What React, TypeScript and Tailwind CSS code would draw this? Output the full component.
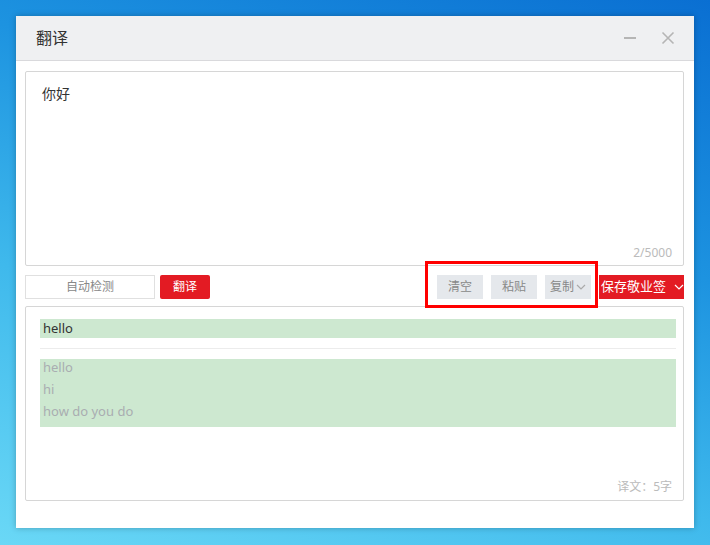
import { useState } from 'react';

const font = "font-['Noto_Sans','Noto_Sans_CJK_SC',sans-serif]";

function Chevron({ className }: { className?: string }) {
  return (
    <svg width="10" height="6" viewBox="0 0 10 6" className={className}>
      <polyline points="1,1 5,5 9,1" fill="none" stroke="currentColor" strokeWidth="1.2" />
    </svg>
  );
}

function TitleBar() {
  return (
    <div className="flex h-[45px] items-center justify-between border-b border-[#d9d9dc] bg-[#eff0f2] pl-[20px] pr-[19px]">
      <span className="text-[16px] text-[#333]">翻译</span>
      <div className="flex items-center gap-[24px]">
        <svg width="14" height="14" viewBox="0 0 14 14">
          <line x1="1" y1="7" x2="13" y2="7" stroke="#b5b5b5" strokeWidth="2" />
        </svg>
        <svg width="14" height="14" viewBox="0 0 14 14">
          <path d="M1.5 1.5 L12.5 12.5 M12.5 1.5 L1.5 12.5" stroke="#b5b5b5" strokeWidth="1.6" />
        </svg>
      </div>
    </div>
  );
}

export default function App() {
  const [text] = useState('你好');
  const results = ['hello', 'hi', 'how do you do'];

  return (
    <div
      className={`${font} h-[545px] w-[710px] overflow-hidden bg-[linear-gradient(200deg,#0a6fd2_0%,#1d93e0_35%,#3fb9ec_65%,#6ad8f6_100%)] pl-4 pt-4`}
    >
      <div className="flex h-[512px] w-[678px] flex-col bg-white shadow-[0_0_6px_rgba(0,0,0,0.25)]">
        <TitleBar />
        <div className="flex flex-col pl-[9px] pr-[10px] pt-[10px]">
          <div className="flex h-[195px] flex-col justify-between rounded-[2px] border border-[#d6d6d6] pb-[3px] pl-[16px] pr-[11px] pt-[12px]">
            <div className="text-[14px] leading-[20px] text-[#333]">{text}</div>
            <div className="self-end text-[12px] leading-[18px] text-[#bbb]">
              {text.length}/5000
            </div>
          </div>

          <div className="relative mt-[9px] flex h-[24px] items-center justify-between">
            <div className="flex items-center gap-[5px]">
              <div className="flex h-[24px] w-[130px] items-center justify-center border border-[#e0e0e0] text-[12px] text-[#888]">
                自动检测
              </div>
              <button className="flex h-[24px] w-[50px] items-center justify-center rounded-[2px] bg-[#e31b23] text-[12px] text-white">
                翻译
              </button>
            </div>
            <div className="flex items-center gap-[8px]">
              <button className="h-[24px] w-[46px] bg-[#e5e8ec] text-[12px] text-[#888]">清空</button>
              <button className="h-[24px] w-[46px] bg-[#e5e8ec] text-[12px] text-[#888]">粘贴</button>
              <button className="flex h-[24px] w-[46px] items-center justify-center gap-[2px] bg-[#e5e8ec] text-[12px] text-[#888]">
                复制
                <Chevron className="text-[#aaa]" />
              </button>
              <button className="flex h-[24px] w-[85px] items-center gap-[8px] bg-[#e31b23] pl-[2px] text-[13px] text-white">
                保存敬业签
                <Chevron className="text-white" />
              </button>
            </div>
            <div className="pointer-events-none absolute left-[400px] top-[-14px] h-[47px] w-[173px] border-[3px] border-[#ff0000]" />
          </div>

          <div className="mt-[7px] flex h-[195px] flex-col rounded-[2px] border border-[#d6d6d6] pb-[4px] pl-[14px] pr-[7px] pt-[12px]">
            <div className="flex h-[19px] items-center bg-[#cde8d0] pl-[3px] text-[13px] text-[#333]">
              hello
            </div>
            <div className="mt-[10px] h-px bg-[#ececec]" />
            <div className="mt-[10px] flex h-[68px] flex-col bg-[#cde8d0] pl-[3px] text-[13px] text-[#a9adb1]">
              {results.map((r) => (
                <div key={r} className="h-[22px] leading-[16px]">
                  {r}
                </div>
              ))}
            </div>
            <div className="mt-auto self-end pr-[4px] text-[12px] leading-[18px] text-[#bbb]">
              译文：5字
            </div>
          </div>
        </div>
      </div>
    </div>
  );
}
